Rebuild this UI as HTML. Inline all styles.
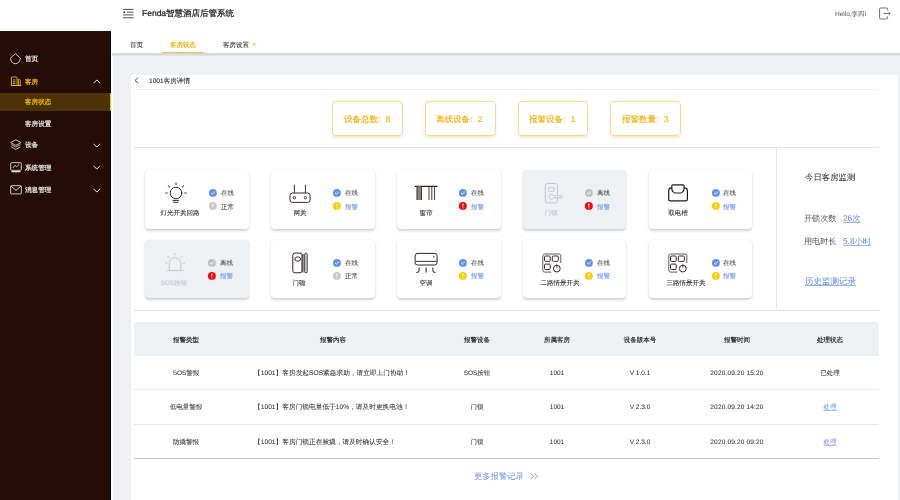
<!DOCTYPE html>
<html><head><meta charset="utf-8"><style>
html,body{margin:0;padding:0;width:900px;height:500px;overflow:hidden;background:#fff}
body{position:relative;font-family:"Liberation Sans", sans-serif}
.t{position:absolute;white-space:nowrap;text-rendering:geometricPrecision;will-change:transform}
</style></head><body>
<div style="position:absolute;left:0px;top:0px;width:900px;height:31px;background:#fff"></div>
<svg style="position:absolute;left:122px;top:8px;overflow:visible" width="13" height="12" viewBox="0 0 13 12"><g stroke="#3c3c3c" stroke-width="0.9" fill="none"><line x1="0.8" y1="1.4" x2="11.6" y2="1.4"/><line x1="5" y1="4.2" x2="11.6" y2="4.2"/><line x1="1" y1="6.9" x2="11.6" y2="6.9"/><line x1="1" y1="9.8" x2="11.6" y2="9.8"/></g><circle cx="2.2" cy="4.2" r="0.9" fill="#222"/></svg>
<div class="t" style="left:141.7px;top:8.44px;font-size:8.5px;line-height:11.90px;color:#222;font-weight:normal;-webkit-text-stroke:0.24px #222;">Fenda智慧酒店后管系统</div>
<div class="t" style="left:835.2px;top:10.06px;font-size:6.5px;line-height:9.10px;color:#666;font-weight:normal;-webkit-text-stroke:0.05px #666;">Hello,李四!</div>
<svg style="position:absolute;left:878.8px;top:7px;overflow:visible" width="13" height="13" viewBox="0 0 13 13"><g stroke="#555" stroke-width="0.85" fill="none" stroke-linejoin="round"><path d="M8.6 3.5 V2.1 Q8.6 1 7.5 1 H1.7 Q0.6 1 0.6 2.1 V10.9 Q0.6 12 1.7 12 H7.5 Q8.6 12 8.6 10.9 V9.4"/><line x1="4.6" y1="6.5" x2="10.8" y2="6.5"/><path d="M9.6 5 L11.2 6.5 L9.6 8"/></g></svg>
<div style="position:absolute;left:0px;top:30.6px;width:111px;height:470px;background:#250c07"></div>
<div style="position:absolute;left:109.6px;top:30.6px;width:1.7px;height:470px;background:#080302"></div>
<div style="position:absolute;left:0px;top:92.5px;width:110px;height:18.9px;background:#4d3208"></div>
<div style="position:absolute;left:109.6px;top:92.5px;width:2.1px;height:18.9px;background:#f5c000"></div>
<div class="t" style="left:25px;top:55.30px;font-size:6.6px;line-height:9.24px;color:#e6e6e6;font-weight:normal;-webkit-text-stroke:0.22px #e6e6e6;">首页</div>
<div class="t" style="left:25px;top:78.00px;font-size:6.6px;line-height:9.24px;color:#f1be00;font-weight:normal;-webkit-text-stroke:0.22px #f1be00;">客房</div>
<svg style="position:absolute;left:92.5px;top:78.8px;overflow:visible" width="8" height="5" viewBox="0 0 8 5"><path d="M0.6 4.2 L3.8 0.9 L7 4.2" stroke="#e8e8e8" stroke-width="1" fill="none"/></svg>
<div class="t" style="left:25px;top:98.10px;font-size:6.6px;line-height:9.24px;color:#f1be00;font-weight:normal;-webkit-text-stroke:0.22px #f1be00;">客房状态</div>
<div class="t" style="left:25px;top:119.80px;font-size:6.6px;line-height:9.24px;color:#e6e6e6;font-weight:normal;-webkit-text-stroke:0.22px #e6e6e6;">客房设置</div>
<div class="t" style="left:25px;top:140.90px;font-size:6.6px;line-height:9.24px;color:#e6e6e6;font-weight:normal;-webkit-text-stroke:0.22px #e6e6e6;">设备</div>
<svg style="position:absolute;left:93px;top:142.5px;overflow:visible" width="8" height="5" viewBox="0 0 8 5"><path d="M0.6 0.8 L3.8 4.1 L7 0.8" stroke="#e8e8e8" stroke-width="1" fill="none"/></svg>
<div class="t" style="left:25px;top:163.50px;font-size:6.6px;line-height:9.24px;color:#e6e6e6;font-weight:normal;-webkit-text-stroke:0.22px #e6e6e6;">系统管理</div>
<svg style="position:absolute;left:93px;top:165.1px;overflow:visible" width="8" height="5" viewBox="0 0 8 5"><path d="M0.6 0.8 L3.8 4.1 L7 0.8" stroke="#e8e8e8" stroke-width="1" fill="none"/></svg>
<div class="t" style="left:25px;top:185.90px;font-size:6.6px;line-height:9.24px;color:#e6e6e6;font-weight:normal;-webkit-text-stroke:0.22px #e6e6e6;">消息管理</div>
<svg style="position:absolute;left:93px;top:187.5px;overflow:visible" width="8" height="5" viewBox="0 0 8 5"><path d="M0.6 0.8 L3.8 4.1 L7 0.8" stroke="#e8e8e8" stroke-width="1" fill="none"/></svg>
<svg style="position:absolute;left:9px;top:53px;overflow:visible" width="13" height="12" viewBox="0 0 13 12"><path d="M1 5.5 L6.4 0.7 L11.8 5.5 L11 6.1 A4.6 4.6 0 0 1 1.8 6.1 Z" stroke="#e0dcd8" stroke-width="0.9" fill="none" stroke-linejoin="round"/></svg>
<svg style="position:absolute;left:9.5px;top:76px;overflow:visible" width="12" height="11" viewBox="0 0 12 11"><g stroke="#e3b300" stroke-width="0.95" fill="none"><path d="M1.4 9.4 V1.8 Q1.4 1 2.2 1 H6.2 Q7 1 7 1.8 V9.4"/><path d="M8.4 9.4 V3.5 H9.4 Q10.2 3.5 10.2 4.3 V9.4"/><line x1="3" y1="4" x2="5.4" y2="4"/><line x1="3" y1="5.8" x2="5.4" y2="5.8"/><line x1="3" y1="7.6" x2="5.4" y2="7.6"/><line x1="0.8" y1="9.5" x2="11.3" y2="9.5" stroke-width="1.1"/></g></svg>
<svg style="position:absolute;left:9.5px;top:138.5px;overflow:visible" width="12" height="12" viewBox="0 0 12 12"><g stroke="#e0dcd8" stroke-width="0.85" fill="none" stroke-linejoin="round"><path d="M5.8 0.8 L11 3.6 L5.8 6.4 L0.6 3.6 Z"/><path d="M1.2 5.6 L5.8 8.1 L10.4 5.6"/><path d="M1.2 7.8 L5.8 10.5 L10.4 7.8"/></g></svg>
<svg style="position:absolute;left:9.5px;top:162px;overflow:visible" width="12" height="11" viewBox="0 0 12 11"><g stroke="#e0dcd8" stroke-width="0.9" fill="none" stroke-linejoin="round"><rect x="0.7" y="0.7" width="10.6" height="7.6" rx="0.8"/><path d="M2.8 6 L5 3.4 L6.5 4.8 L9.2 2.3"/><line x1="1.5" y1="9.6" x2="10.5" y2="9.6" stroke-width="1.3"/></g></svg>
<svg style="position:absolute;left:9.5px;top:185px;overflow:visible" width="12" height="10" viewBox="0 0 12 10"><g stroke="#e0dcd8" stroke-width="0.9" fill="none" stroke-linejoin="round"><rect x="0.7" y="0.7" width="10.6" height="8.2" rx="0.8"/><path d="M0.9 1 L6 5.4 L11.1 1"/></g></svg>
<div style="position:absolute;left:111.6px;top:31px;width:788.4px;height:22px;background:#fff"></div>
<div style="position:absolute;left:111.3px;top:55.5px;width:1.4px;height:445px;background:#fafbfc"></div>
<div style="position:absolute;left:111.6px;top:52.9px;width:788.4px;height:1.7px;background:#d4d7db"></div>
<div style="position:absolute;left:111.6px;top:54.6px;width:788.4px;height:0.9px;background:#e3e6e9"></div>
<div style="position:absolute;left:112.6px;top:55.5px;width:787.4px;height:445px;background:#eef1f4"></div>
<div class="t" style="left:130.3px;top:40.76px;font-size:6.5px;line-height:9.10px;color:#3c3c3c;font-weight:normal;-webkit-text-stroke:0.12px #3c3c3c;">首页</div>
<div class="t" style="left:169.7px;top:40.76px;font-size:6.5px;line-height:9.10px;color:#f2b000;font-weight:normal;-webkit-text-stroke:0.18px #f2b000;">客房状态</div>
<div style="position:absolute;left:162px;top:51.6px;width:41.7px;height:1.4px;background:#f5c242"></div>
<div class="t" style="left:222.5px;top:40.76px;font-size:6.5px;line-height:9.10px;color:#3c3c3c;font-weight:normal;-webkit-text-stroke:0.12px #3c3c3c;">客房设置</div>
<svg style="position:absolute;left:252.3px;top:42.2px;overflow:visible" width="5" height="5" viewBox="0 0 5 5"><path d="M0.6 0.6 L4 4 M4 0.6 L0.6 4" stroke="#f2b400" stroke-width="0.8"/></svg>
<div style="position:absolute;left:131px;top:75.4px;width:767px;height:425px;background:#fff"></div>
<svg style="position:absolute;left:134.4px;top:77.2px;overflow:visible" width="5" height="7" viewBox="0 0 5 7"><path d="M4.2 0.6 L1 3.4 L4.2 6.2" stroke="#444" stroke-width="0.9" fill="none"/></svg>
<div class="t" style="left:148.7px;top:76.90px;font-size:6.6px;line-height:9.24px;color:#2a2a2a;font-weight:normal;-webkit-text-stroke:0.1px #2a2a2a;">1001客房详情</div>
<div style="position:absolute;left:134px;top:88.7px;width:745px;height:1.4px;background:#ecf0f4"></div>
<div style="position:absolute;left:332.2px;top:100.8px;width:70.8px;height:34.9px;box-sizing:border-box;border:1px solid #f9d88a;border-radius:4px;box-shadow:0 1.5px 3px rgba(220,170,60,0.25)"></div>
<div class="t" style="left:343.8px;top:113.54px;font-size:8.5px;line-height:11.90px;color:#f3ae08;font-weight:normal;-webkit-text-stroke:0.14px #f3ae08;">设备总数<span style="margin-left:0.4px;margin-right:5px">:</span>8</div>
<div style="position:absolute;left:424.85px;top:100.8px;width:70.8px;height:34.9px;box-sizing:border-box;border:1px solid #f9d88a;border-radius:4px;box-shadow:0 1.5px 3px rgba(220,170,60,0.25)"></div>
<div class="t" style="left:436.45000000000005px;top:113.54px;font-size:8.5px;line-height:11.90px;color:#f3ae08;font-weight:normal;-webkit-text-stroke:0.14px #f3ae08;">离线设备<span style="margin-left:0.4px;margin-right:5px">:</span>2</div>
<div style="position:absolute;left:517.5px;top:100.8px;width:70.8px;height:34.9px;box-sizing:border-box;border:1px solid #f9d88a;border-radius:4px;box-shadow:0 1.5px 3px rgba(220,170,60,0.25)"></div>
<div class="t" style="left:529.1px;top:113.54px;font-size:8.5px;line-height:11.90px;color:#f3ae08;font-weight:normal;-webkit-text-stroke:0.14px #f3ae08;">报警设备<span style="margin-left:0.4px;margin-right:5px">:</span>1</div>
<div style="position:absolute;left:610.1500000000001px;top:100.8px;width:70.8px;height:34.9px;box-sizing:border-box;border:1px solid #f9d88a;border-radius:4px;box-shadow:0 1.5px 3px rgba(220,170,60,0.25)"></div>
<div class="t" style="left:621.7500000000001px;top:113.54px;font-size:8.5px;line-height:11.90px;color:#f3ae08;font-weight:normal;-webkit-text-stroke:0.14px #f3ae08;">报警数量<span style="margin-left:0.4px;margin-right:5px">:</span>3</div>
<div style="position:absolute;left:134px;top:146.8px;width:745px;height:1.4px;background:#e6e7ea"></div>
<div style="position:absolute;left:145.3px;top:170.4px;width:103.6px;height:58.5px;background:#fff;border-radius:4px;box-shadow:0 1.2px 2.5px rgba(0,0,0,0.17),0 0 1.5px rgba(0,0,0,0.07)"></div>
<svg style="position:absolute;left:161.6px;top:179px;overflow:visible" width="28" height="28" viewBox="-14 -14 28 28"><g stroke="#3a2c2a" stroke-width="1" fill="none" stroke-linecap="round"><circle cx="0" cy="0" r="5.8"/><line x1="0" y1="-10" x2="0" y2="-8.5"/><line x1="-7.8" y1="-7.3" x2="-6.3" y2="-6"/><line x1="7.8" y1="-7.3" x2="6.3" y2="-6"/><line x1="-10.2" y1="0" x2="-8.7" y2="0"/><line x1="10.2" y1="0" x2="8.7" y2="0"/><line x1="-3.1" y1="7.4" x2="2.7" y2="7.4"/><line x1="-2.5" y1="9.3" x2="2.1" y2="9.3"/></g></svg>
<div class="t" style="left:30px;width:300px;text-align:center;top:209.26px;font-size:6.5px;line-height:9.10px;color:#333;font-weight:normal;-webkit-text-stroke:0.08px #333;">灯光开关回路</div>
<svg style="position:absolute;left:209.1px;top:189.1px;overflow:visible" width="7.8" height="7.8" viewBox="-3.9 -3.9 7.8 7.8"><circle r="3.95" fill="#658ff2"/><path d="M-1.9 -0.1 L-0.5 1.2 L1.9 -1.1" stroke="#fff" stroke-width="0.95" fill="none"/></svg>
<div class="t" style="left:220.9px;top:189.46px;font-size:6.5px;line-height:9.10px;color:#555;font-weight:normal;-webkit-text-stroke:0.08px #555;">在线</div>
<svg style="position:absolute;left:209.1px;top:202.29999999999998px;overflow:visible" width="7.8" height="7.8" viewBox="-3.9 -3.9 7.8 7.8"><circle r="3.95" fill="#c4c7cc"/><path d="M-0.7 -2.1 Q0 -2.6 0.7 -2.1 L0.3 0.8 L-0.3 0.8 Z" fill="#fff"/><circle cx="0" cy="1.85" r="0.52" fill="#fff"/></svg>
<div class="t" style="left:220.9px;top:202.66px;font-size:6.5px;line-height:9.10px;color:#555;font-weight:normal;-webkit-text-stroke:0.08px #555;">正常</div>
<div style="position:absolute;left:271.15px;top:170.4px;width:103.6px;height:58.5px;background:#fff;border-radius:4px;box-shadow:0 1.2px 2.5px rgba(0,0,0,0.17),0 0 1.5px rgba(0,0,0,0.07)"></div>
<svg style="position:absolute;left:285.9px;top:178.5px;overflow:visible" width="28" height="28" viewBox="-14 -14 28 28"><g stroke="#3a2c2a" stroke-width="1" fill="none"><line x1="-5.6" y1="-8.3" x2="-5.6" y2="0"/><line x1="5.4" y1="-8.3" x2="5.4" y2="0"/><rect x="-10" y="0" width="20.1" height="9.4" rx="2.5" fill="#fff"/><circle cx="-5.6" cy="4.7" r="1.2"/><circle cx="5.4" cy="4.7" r="1.2"/></g></svg>
<div class="t" style="left:149.5px;width:300px;text-align:center;top:209.26px;font-size:6.5px;line-height:9.10px;color:#333;font-weight:normal;-webkit-text-stroke:0.08px #333;">网关</div>
<svg style="position:absolute;left:333.3px;top:189.1px;overflow:visible" width="7.8" height="7.8" viewBox="-3.9 -3.9 7.8 7.8"><circle r="3.95" fill="#658ff2"/><path d="M-1.9 -0.1 L-0.5 1.2 L1.9 -1.1" stroke="#fff" stroke-width="0.95" fill="none"/></svg>
<div class="t" style="left:345.09999999999997px;top:189.46px;font-size:6.5px;line-height:9.10px;color:#555;font-weight:normal;-webkit-text-stroke:0.08px #555;">在线</div>
<svg style="position:absolute;left:333.3px;top:202.29999999999998px;overflow:visible" width="7.8" height="7.8" viewBox="-3.9 -3.9 7.8 7.8"><circle r="3.95" fill="#fbcf00"/><path d="M-0.7 -2.1 Q0 -2.6 0.7 -2.1 L0.3 0.8 L-0.3 0.8 Z" fill="#fff"/><circle cx="0" cy="1.85" r="0.52" fill="#fff"/></svg>
<div class="t" style="left:345.09999999999997px;top:202.66px;font-size:6.5px;line-height:9.10px;color:#6d93f4;font-weight:normal;-webkit-text-stroke:0.08px #6d93f4;">报警</div>
<div style="position:absolute;left:397.0px;top:170.4px;width:103.6px;height:58.5px;background:#fff;border-radius:4px;box-shadow:0 1.2px 2.5px rgba(0,0,0,0.17),0 0 1.5px rgba(0,0,0,0.07)"></div>
<svg style="position:absolute;left:411.5px;top:178.8px;overflow:visible" width="28" height="28" viewBox="-14 -14 28 28"><g stroke="#2c2422" fill="none"><line x1="-10.8" y1="-6.7" x2="11" y2="-6.7" stroke-width="1.2" stroke-linecap="round"/><rect x="-9.2" y="-6.5" width="4.8" height="13.5" fill="#8a8686" stroke="none"/><line x1="-9" y1="-6.5" x2="-9" y2="7" stroke-width="0.9"/><line x1="-4.6" y1="-6.5" x2="-4.6" y2="7" stroke-width="0.9"/><line x1="3" y1="-6.5" x2="3" y2="7" stroke-width="0.9"/><line x1="5.8" y1="-6.5" x2="5.8" y2="7" stroke-width="0.9"/><line x1="8.5" y1="-6.5" x2="8.5" y2="7" stroke-width="1.2" stroke="#555"/></g></svg>
<div class="t" style="left:275.7px;width:300px;text-align:center;top:209.26px;font-size:6.5px;line-height:9.10px;color:#333;font-weight:normal;-webkit-text-stroke:0.08px #333;">窗帘</div>
<svg style="position:absolute;left:459.3px;top:189.1px;overflow:visible" width="7.8" height="7.8" viewBox="-3.9 -3.9 7.8 7.8"><circle r="3.95" fill="#658ff2"/><path d="M-1.9 -0.1 L-0.5 1.2 L1.9 -1.1" stroke="#fff" stroke-width="0.95" fill="none"/></svg>
<div class="t" style="left:471.09999999999997px;top:189.46px;font-size:6.5px;line-height:9.10px;color:#555;font-weight:normal;-webkit-text-stroke:0.08px #555;">在线</div>
<svg style="position:absolute;left:459.3px;top:202.29999999999998px;overflow:visible" width="7.8" height="7.8" viewBox="-3.9 -3.9 7.8 7.8"><circle r="3.95" fill="#f20a0a"/><path d="M-0.7 -2.1 Q0 -2.6 0.7 -2.1 L0.3 0.8 L-0.3 0.8 Z" fill="#fff"/><circle cx="0" cy="1.85" r="0.52" fill="#fff"/></svg>
<div class="t" style="left:471.09999999999997px;top:202.66px;font-size:6.5px;line-height:9.10px;color:#6d93f4;font-weight:normal;-webkit-text-stroke:0.08px #6d93f4;">报警</div>
<div style="position:absolute;left:522.8499999999999px;top:170.4px;width:103.6px;height:58.5px;background:#eef1f4;border-radius:4px;box-shadow:0 1.2px 2.5px rgba(0,0,0,0.17),0 0 1.5px rgba(0,0,0,0.07)"></div>
<svg style="position:absolute;left:537px;top:178.5px;overflow:visible" width="28" height="28" viewBox="-14 -14 28 28"><g stroke="#c5c9cf" stroke-width="1" fill="none"><rect x="-5.7" y="-9.5" width="12.2" height="19.4" rx="2"/><rect x="-2.7" y="-5.3" width="5.9" height="3.6" rx="1.1"/><path d="M2.6 2.8 H10.4 A1 1 0 0 1 10.4 4.8 H2.6 A2.4 2.4 0 1 1 2.6 2.8" fill="#eef1f4"/></g></svg>
<div class="t" style="left:401.4px;width:300px;text-align:center;top:209.26px;font-size:6.5px;line-height:9.10px;color:#c0c4cc;font-weight:normal;-webkit-text-stroke:0.08px #c0c4cc;">门锁</div>
<svg style="position:absolute;left:585.2px;top:189.1px;overflow:visible" width="7.8" height="7.8" viewBox="-3.9 -3.9 7.8 7.8"><circle r="3.95" fill="#c2c2c4"/><path d="M-1.9 -0.1 L-0.5 1.2 L1.9 -1.1" stroke="#fff" stroke-width="0.95" fill="none"/></svg>
<div class="t" style="left:597.0px;top:189.46px;font-size:6.5px;line-height:9.10px;color:#555;font-weight:normal;-webkit-text-stroke:0.08px #555;">离线</div>
<svg style="position:absolute;left:585.2px;top:202.29999999999998px;overflow:visible" width="7.8" height="7.8" viewBox="-3.9 -3.9 7.8 7.8"><circle r="3.95" fill="#f20a0a"/><path d="M-0.7 -2.1 Q0 -2.6 0.7 -2.1 L0.3 0.8 L-0.3 0.8 Z" fill="#fff"/><circle cx="0" cy="1.85" r="0.52" fill="#fff"/></svg>
<div class="t" style="left:597.0px;top:202.66px;font-size:6.5px;line-height:9.10px;color:#6d93f4;font-weight:normal;-webkit-text-stroke:0.08px #6d93f4;">报警</div>
<div style="position:absolute;left:648.7px;top:170.4px;width:103.6px;height:58.5px;background:#fff;border-radius:4px;box-shadow:0 1.2px 2.5px rgba(0,0,0,0.17),0 0 1.5px rgba(0,0,0,0.07)"></div>
<svg style="position:absolute;left:664px;top:179.1px;overflow:visible" width="28" height="28" viewBox="-14 -14 28 28"><g stroke="#1e1a1a" stroke-width="1.2" fill="none" stroke-linejoin="round"><path d="M-6.2 -5.2 Q-9.3 -5.2 -9.3 -2.4 V6.2 Q-9.3 7.8 -7.7 7.8 H7.8 Q9.4 7.8 9.4 6.2 V-2.4 Q9.4 -5.2 6.1 -5.2"/><path d="M-6.2 -5.2 V-7.3 Q-6.2 -8.2 -5.3 -8.2 H5.2 Q6.1 -8.2 6.1 -7.3 V-4.2 Q6.1 -2.8 5 -1.5 Q4 0 2.6 0 H-2.7 Q-4.1 0 -5.1 -1.5 Q-6.2 -2.8 -6.2 -4.2 Z" fill="#fff"/></g></svg>
<div class="t" style="left:527.6px;width:300px;text-align:center;top:209.26px;font-size:6.5px;line-height:9.10px;color:#333;font-weight:normal;-webkit-text-stroke:0.08px #333;">取电槽</div>
<svg style="position:absolute;left:711.5px;top:189.1px;overflow:visible" width="7.8" height="7.8" viewBox="-3.9 -3.9 7.8 7.8"><circle r="3.95" fill="#658ff2"/><path d="M-1.9 -0.1 L-0.5 1.2 L1.9 -1.1" stroke="#fff" stroke-width="0.95" fill="none"/></svg>
<div class="t" style="left:723.3px;top:189.46px;font-size:6.5px;line-height:9.10px;color:#555;font-weight:normal;-webkit-text-stroke:0.08px #555;">在线</div>
<svg style="position:absolute;left:711.5px;top:202.29999999999998px;overflow:visible" width="7.8" height="7.8" viewBox="-3.9 -3.9 7.8 7.8"><circle r="3.95" fill="#fbcf00"/><path d="M-0.7 -2.1 Q0 -2.6 0.7 -2.1 L0.3 0.8 L-0.3 0.8 Z" fill="#fff"/><circle cx="0" cy="1.85" r="0.52" fill="#fff"/></svg>
<div class="t" style="left:723.3px;top:202.66px;font-size:6.5px;line-height:9.10px;color:#6d93f4;font-weight:normal;-webkit-text-stroke:0.08px #6d93f4;">报警</div>
<div style="position:absolute;left:145.3px;top:239.7px;width:103.6px;height:58.5px;background:#eef1f4;border-radius:4px;box-shadow:0 1.2px 2.5px rgba(0,0,0,0.17),0 0 1.5px rgba(0,0,0,0.07)"></div>
<svg style="position:absolute;left:160.5px;top:248.3px;overflow:visible" width="28" height="28" viewBox="-14 -14 28 28"><g stroke="#c5c9cf" stroke-width="1" fill="none" stroke-linecap="round"><path d="M-5.8 8.4 V1.5 A5.8 5.8 0 0 1 5.8 1.5 V8.4"/><line x1="-8.3" y1="8.6" x2="8.5" y2="8.6" stroke-linecap="butt"/><line x1="0" y1="-8.6" x2="0" y2="-6.9"/><line x1="-7.2" y1="-5.6" x2="-5.8" y2="-4.2"/><line x1="7.2" y1="-5.6" x2="5.8" y2="-4.2"/><line x1="-9.5" y1="1.1" x2="-7.8" y2="1.1"/><line x1="9.7" y1="1.1" x2="8" y2="1.1"/></g></svg>
<div class="t" style="left:24.30000000000001px;width:300px;text-align:center;top:278.66px;font-size:6.5px;line-height:9.10px;color:#c0c4cc;font-weight:normal;-webkit-text-stroke:0.08px #c0c4cc;">SOS按钮</div>
<svg style="position:absolute;left:208.2px;top:258.50000000000006px;overflow:visible" width="7.8" height="7.8" viewBox="-3.9 -3.9 7.8 7.8"><circle r="3.95" fill="#c2c2c4"/><path d="M-1.9 -0.1 L-0.5 1.2 L1.9 -1.1" stroke="#fff" stroke-width="0.95" fill="none"/></svg>
<div class="t" style="left:220.0px;top:258.86px;font-size:6.5px;line-height:9.10px;color:#555;font-weight:normal;-webkit-text-stroke:0.08px #555;">离线</div>
<svg style="position:absolute;left:208.2px;top:271.70000000000005px;overflow:visible" width="7.8" height="7.8" viewBox="-3.9 -3.9 7.8 7.8"><circle r="3.95" fill="#f20a0a"/><path d="M-0.7 -2.1 Q0 -2.6 0.7 -2.1 L0.3 0.8 L-0.3 0.8 Z" fill="#fff"/><circle cx="0" cy="1.85" r="0.52" fill="#fff"/></svg>
<div class="t" style="left:220.0px;top:272.06px;font-size:6.5px;line-height:9.10px;color:#6d93f4;font-weight:normal;-webkit-text-stroke:0.08px #6d93f4;">报警</div>
<div style="position:absolute;left:271.15px;top:239.7px;width:103.6px;height:58.5px;background:#fff;border-radius:4px;box-shadow:0 1.2px 2.5px rgba(0,0,0,0.17),0 0 1.5px rgba(0,0,0,0.07)"></div>
<svg style="position:absolute;left:285.7px;top:248.60000000000002px;overflow:visible" width="28" height="28" viewBox="-14 -14 28 28"><g stroke="#2c2422" stroke-width="1" fill="none"><rect x="1.8" y="-9" width="2.6" height="18.6" fill="#9a9494" stroke="none"/><rect x="-7.2" y="-9.9" width="9.2" height="19.7" rx="2"/><rect x="-5.1" y="-6" width="5.6" height="4.1" rx="2"/><rect x="4.8" y="-9.9" width="2.3" height="19.7" rx="1.15"/></g></svg>
<div class="t" style="left:149.39999999999998px;width:300px;text-align:center;top:278.66px;font-size:6.5px;line-height:9.10px;color:#333;font-weight:normal;-webkit-text-stroke:0.08px #333;">门磁</div>
<svg style="position:absolute;left:333.1px;top:258.50000000000006px;overflow:visible" width="7.8" height="7.8" viewBox="-3.9 -3.9 7.8 7.8"><circle r="3.95" fill="#658ff2"/><path d="M-1.9 -0.1 L-0.5 1.2 L1.9 -1.1" stroke="#fff" stroke-width="0.95" fill="none"/></svg>
<div class="t" style="left:344.9px;top:258.86px;font-size:6.5px;line-height:9.10px;color:#555;font-weight:normal;-webkit-text-stroke:0.08px #555;">在线</div>
<svg style="position:absolute;left:333.1px;top:271.70000000000005px;overflow:visible" width="7.8" height="7.8" viewBox="-3.9 -3.9 7.8 7.8"><circle r="3.95" fill="#c4c7cc"/><path d="M-0.7 -2.1 Q0 -2.6 0.7 -2.1 L0.3 0.8 L-0.3 0.8 Z" fill="#fff"/><circle cx="0" cy="1.85" r="0.52" fill="#fff"/></svg>
<div class="t" style="left:344.9px;top:272.06px;font-size:6.5px;line-height:9.10px;color:#555;font-weight:normal;-webkit-text-stroke:0.08px #555;">正常</div>
<div style="position:absolute;left:397.0px;top:239.7px;width:103.6px;height:58.5px;background:#fff;border-radius:4px;box-shadow:0 1.2px 2.5px rgba(0,0,0,0.17),0 0 1.5px rgba(0,0,0,0.07)"></div>
<svg style="position:absolute;left:411.9px;top:249.60000000000002px;overflow:visible" width="28" height="28" viewBox="-14 -14 28 28"><g stroke="#2c2422" stroke-width="1" fill="none" stroke-linecap="round"><rect x="-10.9" y="-10.6" width="22" height="11.6" rx="2.4"/><line x1="-10.6" y1="-2.6" x2="10.8" y2="-2.6" stroke-width="1.2" stroke="#555" stroke-linecap="butt"/><circle cx="7.9" cy="-7.2" r="0.75" fill="#2c2422" stroke="none"/><path d="M-6.9 3.9 V7 Q-6.9 8.5 -9.1 8.5"/><line x1="0.1" y1="3.9" x2="0.1" y2="8.2"/><path d="M6.9 3.9 V7 Q6.9 8.5 9.1 8.5"/></g></svg>
<div class="t" style="left:275.7px;width:300px;text-align:center;top:278.66px;font-size:6.5px;line-height:9.10px;color:#333;font-weight:normal;-webkit-text-stroke:0.08px #333;">空调</div>
<svg style="position:absolute;left:459.3px;top:258.50000000000006px;overflow:visible" width="7.8" height="7.8" viewBox="-3.9 -3.9 7.8 7.8"><circle r="3.95" fill="#658ff2"/><path d="M-1.9 -0.1 L-0.5 1.2 L1.9 -1.1" stroke="#fff" stroke-width="0.95" fill="none"/></svg>
<div class="t" style="left:471.09999999999997px;top:258.86px;font-size:6.5px;line-height:9.10px;color:#555;font-weight:normal;-webkit-text-stroke:0.08px #555;">在线</div>
<svg style="position:absolute;left:459.3px;top:271.70000000000005px;overflow:visible" width="7.8" height="7.8" viewBox="-3.9 -3.9 7.8 7.8"><circle r="3.95" fill="#fbcf00"/><path d="M-0.7 -2.1 Q0 -2.6 0.7 -2.1 L0.3 0.8 L-0.3 0.8 Z" fill="#fff"/><circle cx="0" cy="1.85" r="0.52" fill="#fff"/></svg>
<div class="t" style="left:471.09999999999997px;top:272.06px;font-size:6.5px;line-height:9.10px;color:#6d93f4;font-weight:normal;-webkit-text-stroke:0.08px #6d93f4;">报警</div>
<div style="position:absolute;left:522.8499999999999px;top:239.7px;width:103.6px;height:58.5px;background:#fff;border-radius:4px;box-shadow:0 1.2px 2.5px rgba(0,0,0,0.17),0 0 1.5px rgba(0,0,0,0.07)"></div>
<svg style="position:absolute;left:537.9px;top:248.5px;overflow:visible" width="28" height="28" viewBox="-14 -14 28 28"><g stroke="#2c2422" stroke-width="0.95" fill="none" stroke-linejoin="round"><path d="M-0.8 9.1 H-7.4 Q-9.2 9.1 -9.2 7.3 V-7.2 Q-9.2 -9 -7.4 -9 H7 Q8.8 -9 8.8 -7.2 V0" stroke="#555"/><rect x="-7.5" y="-7" width="5.7" height="5.4" rx="1"/><rect x="0.3" y="-7" width="6" height="5.4" rx="1"/><rect x="-7.5" y="1.1" width="5.7" height="5.4" rx="1"/><circle cx="4.8" cy="5.6" r="3.4" fill="#fff"/><line x1="4.8" y1="1.6" x2="4.8" y2="4.4"/></g></svg>
<div class="t" style="left:410.20000000000005px;width:300px;text-align:center;top:278.66px;font-size:6.5px;line-height:9.10px;color:#333;font-weight:normal;-webkit-text-stroke:0.08px #333;">二路情景开关</div>
<svg style="position:absolute;left:585.2px;top:258.50000000000006px;overflow:visible" width="7.8" height="7.8" viewBox="-3.9 -3.9 7.8 7.8"><circle r="3.95" fill="#658ff2"/><path d="M-1.9 -0.1 L-0.5 1.2 L1.9 -1.1" stroke="#fff" stroke-width="0.95" fill="none"/></svg>
<div class="t" style="left:597.0px;top:258.86px;font-size:6.5px;line-height:9.10px;color:#555;font-weight:normal;-webkit-text-stroke:0.08px #555;">在线</div>
<svg style="position:absolute;left:585.2px;top:271.70000000000005px;overflow:visible" width="7.8" height="7.8" viewBox="-3.9 -3.9 7.8 7.8"><circle r="3.95" fill="#fbcf00"/><path d="M-0.7 -2.1 Q0 -2.6 0.7 -2.1 L0.3 0.8 L-0.3 0.8 Z" fill="#fff"/><circle cx="0" cy="1.85" r="0.52" fill="#fff"/></svg>
<div class="t" style="left:597.0px;top:272.06px;font-size:6.5px;line-height:9.10px;color:#6d93f4;font-weight:normal;-webkit-text-stroke:0.08px #6d93f4;">报警</div>
<div style="position:absolute;left:648.7px;top:239.7px;width:103.6px;height:58.5px;background:#fff;border-radius:4px;box-shadow:0 1.2px 2.5px rgba(0,0,0,0.17),0 0 1.5px rgba(0,0,0,0.07)"></div>
<svg style="position:absolute;left:663.9px;top:248.5px;overflow:visible" width="28" height="28" viewBox="-14 -14 28 28"><g stroke="#2c2422" stroke-width="0.95" fill="none" stroke-linejoin="round"><path d="M-0.8 9.1 H-7.4 Q-9.2 9.1 -9.2 7.3 V-7.2 Q-9.2 -9 -7.4 -9 H7 Q8.8 -9 8.8 -7.2 V0" stroke="#555"/><rect x="-7.5" y="-7" width="5.7" height="5.4" rx="1"/><rect x="0.3" y="-7" width="6" height="5.4" rx="1"/><rect x="-7.5" y="1.1" width="5.7" height="5.4" rx="1"/><circle cx="4.8" cy="5.6" r="3.4" fill="#fff"/><line x1="4.8" y1="1.6" x2="4.8" y2="4.4"/></g></svg>
<div class="t" style="left:536.3px;width:300px;text-align:center;top:278.66px;font-size:6.5px;line-height:9.10px;color:#333;font-weight:normal;-webkit-text-stroke:0.08px #333;">三路情景开关</div>
<svg style="position:absolute;left:711.5px;top:258.50000000000006px;overflow:visible" width="7.8" height="7.8" viewBox="-3.9 -3.9 7.8 7.8"><circle r="3.95" fill="#658ff2"/><path d="M-1.9 -0.1 L-0.5 1.2 L1.9 -1.1" stroke="#fff" stroke-width="0.95" fill="none"/></svg>
<div class="t" style="left:723.3px;top:258.86px;font-size:6.5px;line-height:9.10px;color:#555;font-weight:normal;-webkit-text-stroke:0.08px #555;">在线</div>
<svg style="position:absolute;left:711.5px;top:271.70000000000005px;overflow:visible" width="7.8" height="7.8" viewBox="-3.9 -3.9 7.8 7.8"><circle r="3.95" fill="#fbcf00"/><path d="M-0.7 -2.1 Q0 -2.6 0.7 -2.1 L0.3 0.8 L-0.3 0.8 Z" fill="#fff"/><circle cx="0" cy="1.85" r="0.52" fill="#fff"/></svg>
<div class="t" style="left:723.3px;top:272.06px;font-size:6.5px;line-height:9.10px;color:#6d93f4;font-weight:normal;-webkit-text-stroke:0.08px #6d93f4;">报警</div>
<div style="position:absolute;left:775.6px;top:147.9px;width:1.1px;height:161.6px;background:#e3e6ea"></div>
<div style="position:absolute;left:134px;top:309.6px;width:745px;height:1px;background:#dde0e4"></div>
<div class="t" style="left:805.1px;top:171.50px;font-size:8.4px;line-height:11.76px;color:#333;font-weight:normal;-webkit-text-stroke:0.05px #333;">今日客房监测</div>
<div class="t" style="left:804.2px;top:212.86px;font-size:8.1px;line-height:11.34px;color:#555;font-weight:normal;">开锁次数</div>
<div class="t" style="left:843.2px;top:212.75px;font-size:8.3px;line-height:11.62px;color:#5d86ee;font-weight:normal;text-decoration:underline;text-decoration-color:#9db5f3">26次</div>
<div class="t" style="left:804.2px;top:236.46px;font-size:8.1px;line-height:11.34px;color:#555;font-weight:normal;">用电时长</div>
<div class="t" style="left:843.2px;top:236.35px;font-size:8.3px;line-height:11.62px;color:#5d86ee;font-weight:normal;text-decoration:underline;text-decoration-color:#9db5f3">5.8小时</div>
<div class="t" style="left:804.8px;top:276.04px;font-size:8.5px;line-height:11.90px;color:#5d86ee;font-weight:normal;text-decoration:underline;text-decoration-color:#9db5f3">历史监测记录</div>
<div style="position:absolute;left:134px;top:321.8px;width:745px;height:33.8px;background:#eef1f4;border-radius:3px 3px 0 0"></div>
<div class="t" style="left:36px;width:300px;text-align:center;top:335.96px;font-size:6.5px;line-height:9.10px;color:#222;font-weight:normal;-webkit-text-stroke:0.16px #222;">报警类型</div>
<div class="t" style="left:183.39999999999998px;width:300px;text-align:center;top:335.96px;font-size:6.5px;line-height:9.10px;color:#222;font-weight:normal;-webkit-text-stroke:0.16px #222;">报警内容</div>
<div class="t" style="left:327.3px;width:300px;text-align:center;top:335.96px;font-size:6.5px;line-height:9.10px;color:#222;font-weight:normal;-webkit-text-stroke:0.16px #222;">报警设备</div>
<div class="t" style="left:407px;width:300px;text-align:center;top:335.96px;font-size:6.5px;line-height:9.10px;color:#222;font-weight:normal;-webkit-text-stroke:0.16px #222;">所属客房</div>
<div class="t" style="left:489.6px;width:300px;text-align:center;top:335.96px;font-size:6.5px;line-height:9.10px;color:#222;font-weight:normal;-webkit-text-stroke:0.16px #222;">设备版本号</div>
<div class="t" style="left:587px;width:300px;text-align:center;top:335.96px;font-size:6.5px;line-height:9.10px;color:#222;font-weight:normal;-webkit-text-stroke:0.16px #222;">报警时间</div>
<div class="t" style="left:680px;width:300px;text-align:center;top:335.96px;font-size:6.5px;line-height:9.10px;color:#222;font-weight:normal;-webkit-text-stroke:0.16px #222;">处理状态</div>
<div class="t" style="left:36px;width:300px;text-align:center;top:369.26px;font-size:6.5px;line-height:9.10px;color:#333;font-weight:normal;-webkit-text-stroke:0.04px #333;">SOS警报</div>
<div class="t" style="left:253.6px;top:369.15px;font-size:6.7px;line-height:9.38px;color:#333;font-weight:normal;-webkit-text-stroke:0.04px #333;">【1001】客房发起SOS紧急求助，请立即上门协助！</div>
<div class="t" style="left:327.3px;width:300px;text-align:center;top:369.26px;font-size:6.5px;line-height:9.10px;color:#333;font-weight:normal;-webkit-text-stroke:0.04px #333;">SOS按钮</div>
<div class="t" style="left:407px;width:300px;text-align:center;top:369.26px;font-size:6.5px;line-height:9.10px;color:#333;font-weight:normal;-webkit-text-stroke:0.04px #333;">1001</div>
<div class="t" style="left:489.6px;width:300px;text-align:center;top:369.26px;font-size:6.5px;line-height:9.10px;color:#333;font-weight:normal;-webkit-text-stroke:0.04px #333;">V 1.0.1</div>
<div class="t" style="left:587px;width:300px;text-align:center;top:369.26px;font-size:6.5px;line-height:9.10px;color:#333;font-weight:normal;-webkit-text-stroke:0.04px #333;letter-spacing:0.17px">2020.09.20 15:20</div>
<div class="t" style="left:680px;width:300px;text-align:center;top:369.26px;font-size:6.5px;line-height:9.10px;color:#333;font-weight:normal;-webkit-text-stroke:0.04px #333;">已处理</div>
<div class="t" style="left:36px;width:300px;text-align:center;top:403.46px;font-size:6.5px;line-height:9.10px;color:#333;font-weight:normal;-webkit-text-stroke:0.04px #333;">低电量警报</div>
<div class="t" style="left:253.6px;top:403.35px;font-size:6.7px;line-height:9.38px;color:#333;font-weight:normal;-webkit-text-stroke:0.04px #333;">【1001】客房门锁电量低于10%，请及时更换电池！</div>
<div class="t" style="left:327.3px;width:300px;text-align:center;top:403.46px;font-size:6.5px;line-height:9.10px;color:#333;font-weight:normal;-webkit-text-stroke:0.04px #333;">门锁</div>
<div class="t" style="left:407px;width:300px;text-align:center;top:403.46px;font-size:6.5px;line-height:9.10px;color:#333;font-weight:normal;-webkit-text-stroke:0.04px #333;">1001</div>
<div class="t" style="left:489.6px;width:300px;text-align:center;top:403.46px;font-size:6.5px;line-height:9.10px;color:#333;font-weight:normal;-webkit-text-stroke:0.04px #333;">V 2.3.0</div>
<div class="t" style="left:587px;width:300px;text-align:center;top:403.46px;font-size:6.5px;line-height:9.10px;color:#333;font-weight:normal;-webkit-text-stroke:0.04px #333;letter-spacing:0.17px">2020.09.20 14:20</div>
<div class="t" style="left:680px;width:300px;text-align:center;top:403.46px;font-size:6.5px;line-height:9.10px;color:#5d86ee;font-weight:normal;text-decoration:underline;text-decoration-color:#a5bbf3">处理</div>
<div class="t" style="left:36px;width:300px;text-align:center;top:438.06px;font-size:6.5px;line-height:9.10px;color:#333;font-weight:normal;-webkit-text-stroke:0.04px #333;">防撬警报</div>
<div class="t" style="left:253.6px;top:437.95px;font-size:6.7px;line-height:9.38px;color:#333;font-weight:normal;-webkit-text-stroke:0.04px #333;">【1001】客房门锁正在被撬，请及时确认安全！</div>
<div class="t" style="left:327.3px;width:300px;text-align:center;top:438.06px;font-size:6.5px;line-height:9.10px;color:#333;font-weight:normal;-webkit-text-stroke:0.04px #333;">门锁</div>
<div class="t" style="left:407px;width:300px;text-align:center;top:438.06px;font-size:6.5px;line-height:9.10px;color:#333;font-weight:normal;-webkit-text-stroke:0.04px #333;">1001</div>
<div class="t" style="left:489.6px;width:300px;text-align:center;top:438.06px;font-size:6.5px;line-height:9.10px;color:#333;font-weight:normal;-webkit-text-stroke:0.04px #333;">V 2.3.0</div>
<div class="t" style="left:587px;width:300px;text-align:center;top:438.06px;font-size:6.5px;line-height:9.10px;color:#333;font-weight:normal;-webkit-text-stroke:0.04px #333;letter-spacing:0.17px">2020.09.20 09:20</div>
<div class="t" style="left:680px;width:300px;text-align:center;top:438.06px;font-size:6.5px;line-height:9.10px;color:#5d86ee;font-weight:normal;text-decoration:underline;text-decoration-color:#a5bbf3">处理</div>
<div style="position:absolute;left:134px;top:389.2px;width:745px;height:0.9px;background:#e8ebef"></div>
<div style="position:absolute;left:134px;top:424px;width:745px;height:0.9px;background:#e3e6ea"></div>
<div style="position:absolute;left:134px;top:458px;width:745px;height:1.3px;background:#c4c8cd"></div>
<div class="t" style="left:474px;top:471.35px;font-size:8.3px;line-height:11.62px;color:#6a8df2;font-weight:normal;">更多报警记录</div>
<svg style="position:absolute;left:529.5px;top:472.5px;overflow:visible" width="9" height="7" viewBox="0 0 9 7"><path d="M0.6 0.6 L3.4 3.3 L0.6 6 M4.6 0.6 L7.4 3.3 L4.6 6" stroke="#6a8df2" stroke-width="0.8" fill="none"/></svg>
</body></html>
